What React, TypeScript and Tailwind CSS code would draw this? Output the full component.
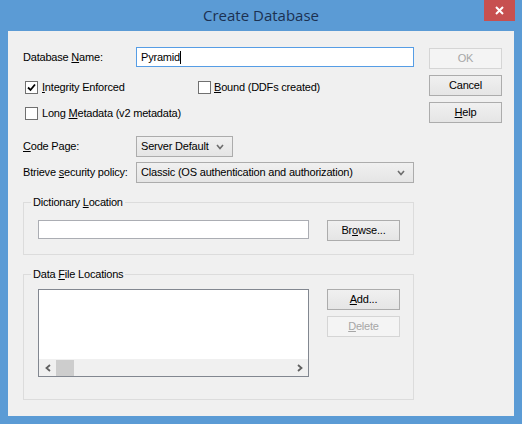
import React from "react"

const font = { fontFamily: '"Liberation Sans", Arial, sans-serif' }

function Btn({ children, disabled, className = "" }: { children: React.ReactNode; disabled?: boolean; className?: string }) {
    return (
        <div
            className={
                "flex items-center justify-center w-[73px] h-[21px] text-[11px] border " +
                (disabled
                    ? "border-[#d5d5d5] bg-[#f4f4f4] text-[#a6a6a6] "
                    : "border-[#acacac] bg-gradient-to-b from-[#f0f0f0] to-[#e5e5e5] text-black ") +
                className
            }
        >
            {children}
        </div>
    )
}

function Check({ checked }: { checked?: boolean }) {
    return (
        <div className="w-[13px] h-[13px] border border-[#707070] bg-white flex items-center justify-center shrink-0">
            {checked && (
                <svg width="9" height="9" viewBox="0 0 9 9">
                    <path d="M1 4.5 L3.5 7 L8 1.5" fill="none" stroke="#000" strokeWidth="1.8" />
                </svg>
            )}
        </div>
    )
}

function Combo({ text, className = "" }: { text: string; className?: string }) {
    return (
        <div className={"flex items-center justify-between h-[21px] border border-[#acacac] bg-gradient-to-b from-[#f0f0f0] to-[#e5e5e5] pl-[4px] pr-[8px] text-[11px] " + className}>
            <span>{text}</span>
            <svg width="8" height="6" viewBox="0 0 8 6">
                <path d="M1 1 L4 4.5 L7 1" fill="none" stroke="#6d6d6d" strokeWidth="1.6" />
            </svg>
        </div>
    )
}

function Group({ title, className = "", children }: { title: React.ReactNode; className?: string; children: React.ReactNode }) {
    return (
        <div className={"relative border border-[#dcdcdc] " + className}>
            <span className="absolute -top-[8px] left-[7px] px-[2px] bg-[#f0f0f0] text-[11px] leading-[14px]">{title}</span>
            {children}
        </div>
    )
}

export default function App() {
    return (
        <div className="w-[522px] h-[424px] bg-[#5b9bd5] flex flex-col" style={font}>
            {/* title bar */}
            <div className="relative h-[31px] flex items-center justify-center">
                <span className="text-[15px] text-[#1b3152] mt-[-1px]" style={{ fontFamily: '"Open Sans", "Noto Sans", sans-serif' }}>
                    Create Database
                </span>
                <div className="absolute right-[7px] top-0 w-[31px] h-[21px] bg-[#c75050] flex items-center justify-center">
                    <svg width="9" height="9" viewBox="0 0 9 9">
                        <path d="M1 1 L8 8 M8 1 L1 8" stroke="#fff" strokeWidth="2" />
                    </svg>
                </div>
            </div>

            {/* client area */}
            <div className="mx-[8px] h-[385px] bg-[#f0f0f0] flex text-black text-[11px] tracking-[-0.2px]">
                <div className="ml-[15px] w-[391px] flex flex-col">
                    <div className="flex items-center mt-[16px] h-[20px]">
                        <span className="w-[113px]">Database <u>N</u>ame:</span>
                        <div className="w-[278px] h-[20px] border border-[#569de5] bg-white flex items-center pl-[4px]">
                            Pyramid<span className="w-px h-[13px] bg-black" />
                        </div>
                    </div>

                    <div className="flex items-center mt-[14px] h-[13px] pl-[2px]">
                        <Check checked />
                        <span className="ml-[4px] w-[156px]"><u>I</u>ntegrity Enforced</span>
                        <Check />
                        <span className="ml-[3px]"><u>B</u>ound (DDFs created)</span>
                    </div>

                    <div className="flex items-center mt-[13px] h-[13px] pl-[2px]">
                        <Check />
                        <span className="ml-[4px]">Long <u>M</u>etadata (v2 metadata)</span>
                    </div>

                    <div className="flex items-center mt-[16px]">
                        <span className="w-[113px]"><u>C</u>ode Page:</span>
                        <Combo text="Server Default" className="w-[97px]" />
                    </div>

                    <div className="flex items-center mt-[5px]">
                        <span className="w-[113px]">Btrieve <u>s</u>ecurity policy:</span>
                        <Combo text="Classic (OS authentication and authorization)" className="w-[278px]" />
                    </div>

                    <Group title={<>Dictionary <u>L</u>ocation</>} className="mt-[19px] h-[53px]">
                        <div className="flex items-center mt-[15px] ml-[14px]">
                            <div className="w-[271px] h-[19px] border border-[#abadb3] bg-white" />
                            <Btn className="ml-[18px] mt-[2px]">Br<u>o</u>wse...</Btn>
                        </div>
                    </Group>

                    <Group title={<>Data <u>F</u>ile Locations</>} className="mt-[19px] h-[126px]">
                        <div className="flex mt-[14px] ml-[14px]">
                            <div className="w-[271px] h-[88px] border border-[#828790] bg-white flex flex-col justify-end">
                                <div className="h-[17px] bg-[#f0f0f0] flex items-center">
                                    <div className="w-[17px] flex justify-center">
                                        <svg width="6" height="8" viewBox="0 0 6 8">
                                            <path d="M5 1 L1.5 4 L5 7" fill="none" stroke="#606060" strokeWidth="1.8" />
                                        </svg>
                                    </div>
                                    <div className="w-[18px] h-[16px] bg-[#cdcdcd]" />
                                    <div className="flex-1" />
                                    <div className="w-[17px] flex justify-center">
                                        <svg width="6" height="8" viewBox="0 0 6 8">
                                            <path d="M1 1 L4.5 4 L1 7" fill="none" stroke="#606060" strokeWidth="1.8" />
                                        </svg>
                                    </div>
                                </div>
                            </div>
                            <div className="ml-[18px] flex flex-col gap-[6px]">
                                <Btn><u>A</u>dd...</Btn>
                                <Btn disabled><u>D</u>elete</Btn>
                            </div>
                        </div>
                    </Group>
                </div>

                <div className="ml-[15px] mt-[17px] flex flex-col gap-[6px]">
                    <Btn disabled>OK</Btn>
                    <Btn>Cancel</Btn>
                    <Btn><u>H</u>elp</Btn>
                </div>
            </div>
        </div>
    )
}
